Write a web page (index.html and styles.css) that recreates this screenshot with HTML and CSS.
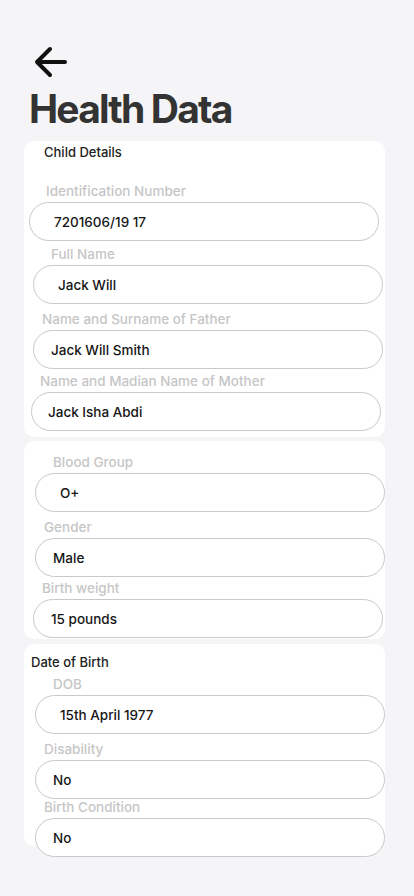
FILE: index.html
```html
<!DOCTYPE html>
<html lang="en">
<head>
<meta charset="utf-8">
<title>Health Data</title>
<link rel="stylesheet" href="styles.css">
</head>
<body>
<div class="screen">
  <button class="back" aria-label="Back">
    <svg width="36" height="32" viewBox="0 0 36 32"><path d="M4 16H32M17 3L4 16L17 29" fill="none" stroke="#111" stroke-width="4" stroke-linecap="round" stroke-linejoin="round"/></svg>
  </button>
  <h1 class="title">Health Data</h1>

  <section class="card card-child">
    <h2 class="card-heading h-child">Child Details</h2>
    <div class="field c1f1"><span class="label">Identification Number</span><div class="input">7201606/19 17</div></div>
    <div class="field c1f2"><span class="label">Full Name</span><div class="input">Jack Will</div></div>
    <div class="field c1f3"><span class="label">Name and Surname of Father</span><div class="input">Jack Will Smith</div></div>
    <div class="field c1f4"><span class="label">Name and Madian Name of Mother</span><div class="input">Jack Isha Abdi</div></div>
  </section>

  <section class="card card-body">
    <div class="field c2f1"><span class="label">Blood Group</span><div class="input">O+</div></div>
    <div class="field c2f2"><span class="label">Gender</span><div class="input">Male</div></div>
    <div class="field c2f3"><span class="label">Birth weight</span><div class="input">15 pounds</div></div>
  </section>

  <section class="card card-birth">
    <h2 class="card-heading h-birth">Date of Birth</h2>
    <div class="field c3f1"><span class="label">DOB</span><div class="input">15th April 1977</div></div>
    <div class="field c3f2"><span class="label">Disability</span><div class="input">No</div></div>
    <div class="field c3f3"><span class="label">Birth Condition</span><div class="input">No</div></div>
  </section>
</div>
</body>
</html>
```
FILE: styles.css
```css
* { box-sizing: border-box; }
html, body { margin: 0; padding: 0; }
body {
  background: #f5f5f7;
  font-family: Inter, "Noto Sans", sans-serif;
  color: #1a1a1a;
}
.screen {
  width: 414px;
  min-height: 896px;
  display: flex;
  flex-direction: column;
  padding-bottom: 40px;
}
.back {
  margin: 46px 0 0 33px;
  padding: 0;
  border: 0;
  background: none;
  width: 36px;
  height: 32px;
  display: block;
  align-self: flex-start;
}
.back svg { display: block; }
.title {
  margin: 7px 0 0 29px;
  font-size: 39px;
  line-height: 48px;
  font-weight: 700;
  color: #333;
  letter-spacing: -1.8px;
}
.card {
  margin: 8px 0 0 24px;
  width: 361px;
  background: #fff;
  border-radius: 10px;
  display: flex;
  flex-direction: column;
}
.card-child { height: 296px; }
.card-body { height: 198px; margin-top: 4px; padding-top: 13px; }
.card-birth { height: 202px; margin-top: 5px; }
.card-heading {
  margin: 0;
  font-size: 13px;
  line-height: 16px;
  font-weight: 500;
  color: #222;
}
.h-child { margin: 3px 0 0 20px; }
.h-birth { margin: 10px 0 0 7px; }
.field {
  display: flex;
  flex-direction: column;
}
.label {
  font-size: 13.5px;
  line-height: 16px;
  font-weight: 500;
  color: #c6c6c6;
  height: 16px;
}
.input {
  width: 350px;
  height: 39px;
  margin-top: 3px;
  border: 1px solid #c9c9c9;
  border-radius: 20px;
  background: #fff;
  font-size: 13.5px;
  font-weight: 500;
  color: #161616;
  display: flex;
  align-items: center;
}
/* card 1 */
.c1f1 { margin-top: 23px; }
.c1f1 .label { margin-left: 22px; }
.c1f1 .input { margin-left: 5px; padding-left: 24px; }
.c1f2 { margin-top: 5px; }
.c1f2 .label { margin-left: 27px; }
.c1f2 .input { margin-left: 9px; padding-left: 24px; }
.c1f3 { margin-top: 7px; }
.c1f3 .label { margin-left: 18px; }
.c1f3 .input { margin-left: 9px; padding-left: 17px; }
.c1f4 { margin-top: 4px; }
.c1f4 .label { margin-left: 16px; }
.c1f4 .input { margin-left: 7px; padding-left: 16px; }
/* card 2 */
.c2f1 .label { margin-left: 29px; }
.c2f1 .input { margin-left: 11px; padding-left: 24px; }
.c2f2 { margin-top: 7px; }
.c2f2 .label { margin-left: 20px; }
.c2f2 .input { margin-left: 11px; padding-left: 17px; }
.c2f3 { margin-top: 3px; }
.c2f3 .label { margin-left: 18px; }
.c2f3 .input { margin-left: 9px; padding-left: 17px; }
/* card 3 */
.c3f1 { margin-top: 6px; }
.c3f1 .label { margin-left: 29px; }
.c3f1 .input { margin-left: 11px; padding-left: 24px; }
.c3f2 { margin-top: 7px; }
.c3f2 .label { margin-left: 20px; }
.c3f2 .input { margin-left: 11px; padding-left: 17px; }
.c3f3 { margin-top: 0; }
.c3f3 .label { margin-left: 20px; }
.c3f3 .input { margin-left: 11px; padding-left: 17px; }
```
